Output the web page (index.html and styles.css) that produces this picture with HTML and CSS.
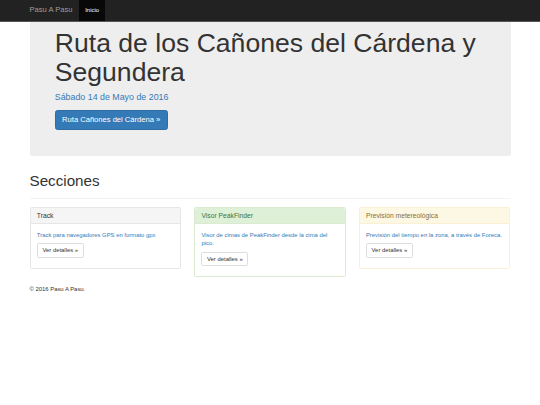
FILE: index.html
```html
<!DOCTYPE html>
<html lang="es">
<head>
    <meta charset="UTF-8">
    <meta name="viewport" content="width=device-width, initial-scale=1.0">
    <title>Pasu A Pasu</title>
    <link rel="stylesheet" href="styles.css">
</head>
<body>
    <nav class="navbar">
        <div class="container navbar-inner">
            <a class="brand" href="#">Pasu A Pasu</a>
            <ul class="nav">
                <li class="active"><a href="#">Inicio</a></li>
            </ul>
        </div>
    </nav>

    <div class="container">
        <div class="jumbotron">
            <h1>Ruta de los Cañones del Cárdena y Segundera</h1>
            <p class="date">Sábado 14 de Mayo de 2016</p>
            <p><a class="btn btn-primary btn-lg" href="#">Ruta Cañones del Cárdena &raquo;</a></p>
        </div>

        <div class="page-header">
            <h1>Secciones</h1>
        </div>

        <div class="row">
            <div class="panel panel-default">
                <div class="panel-heading">Track</div>
                <div class="panel-body">
                    <p class="desc">Track para navegadores GPS en formato gpx</p>
                    <p><a class="btn btn-default" href="#">Ver detalles &raquo;</a></p>
                </div>
            </div>
            <div class="panel panel-success">
                <div class="panel-heading">Visor PeakFinder</div>
                <div class="panel-body">
                    <p class="desc">Visor de cimas de PeakFinder desde la cima del pico.</p>
                    <p><a class="btn btn-default" href="#">Ver detalles &raquo;</a></p>
                </div>
            </div>
            <div class="panel panel-warning">
                <div class="panel-heading">Previsión metereológica</div>
                <div class="panel-body">
                    <p class="desc">Previsión del tiempo en la zona, a través de Foreca.</p>
                    <p><a class="btn btn-default" href="#">Ver detalles &raquo;</a></p>
                </div>
            </div>
        </div>

        <footer>
            <p>&copy; 2016 Pasu A Pasu.</p>
        </footer>
    </div>
</body>
</html>
```

FILE: styles.css
```css
body {
    margin: 0;
    font-family: 'Liberation Sans', Arial, sans-serif;
    font-size: 5.9px;
    line-height: 8.44px;
    color: #333;
    background-color: #fff;
}
a {
    text-decoration: none;
}
p {
    margin: 0 0 4.22px;
}
.container {
    width: 481px;
    margin: 0 auto;
    padding: 0 6.33px;
}

/* navbar */
.navbar {
    background-color: #222;
    border-bottom: 1px solid #555;
    height: 20.6px;
}
.navbar-inner {
    display: flex;
    align-items: stretch;
    height: 100%;
}
.brand {
    margin-left: -6.33px;
    padding: 0 6.33px;
    font-size: 7.6px;
    line-height: 20.6px;
    color: #9d9d9d;
}
.nav {
    display: flex;
    list-style: none;
    margin: 0;
    padding: 0;
}
.nav a {
    display: block;
    padding: 0 6.33px;
    line-height: 20.6px;
    color: #9d9d9d;
}
.nav .active a {
    background-color: #080808;
    color: #fff;
}

/* jumbotron */
.jumbotron {
    background-color: #eee;
    border-radius: 0 0 2.5px 2.5px;
    padding: 7.1px 25.3px 20.25px;
    margin-bottom: 12.66px;
}
.jumbotron h1 {
    font-size: 26.58px;
    line-height: 1.1;
    font-weight: 500;
    margin: 0 0 4.22px;
}
.jumbotron p {
    margin-bottom: 6.33px;
}
.jumbotron .date {
    font-size: 8.86px;
    line-height: 12.66px;
    color: #337ab7;
}

/* buttons */
.btn {
    display: inline-block;
    border: 1px solid transparent;
    white-space: nowrap;
}
.btn-lg {
    font-size: 7.59px;
    line-height: 10.12px;
    padding: 3.65px 6.3px;
    border-radius: 2.5px;
}
.btn-primary {
    background-color: #337ab7;
    border-color: #2e6da4;
    color: #fff;
}
.btn-default {
    background-color: #fff;
    border-color: #ddd;
    color: #333;
    font-size: 5.9px;
    line-height: 8.44px;
    padding: 1.95px 4.6px;
    border-radius: 1.7px;
}

/* sections */
.page-header {
    margin: 16.88px 0 8.44px;
    padding-bottom: 3.8px;
    border-bottom: 1px solid #f3f3f3;
}
.page-header h1 {
    font-size: 15.19px;
    line-height: 16.7px;
    font-weight: 500;
    margin: 0 0 4.22px;
}
.row {
    display: grid;
    grid-template-columns: repeat(3, 1fr);
    gap: 12.66px;
    align-items: start;
}
.panel {
    border: 1px solid #e6e6e6;
    border-radius: 1.7px;
    margin-bottom: 8.44px;
    background-color: #fff;
}
.panel-heading {
    padding: 3.8px 6.33px;
    border-bottom: 1px solid #e6e6e6;
    border-radius: 1.7px 1.7px 0 0;
    font-size: 6.75px;
    line-height: 7.43px;
}
.panel-default .panel-heading {
    background-color: #f5f5f5;
    color: #333;
}
.panel-success {
    border-color: #dcebd0;
}
.panel-success .panel-heading {
    background-color: #dff0d8;
    border-color: #dcebd0;
    color: #3c763d;
}
.panel-warning {
    border-color: #fbefd6;
}
.panel-warning .panel-heading {
    background-color: #fcf8e3;
    border-color: #fbefd6;
    color: #8a6d3b;
}
.panel-body {
    padding: 6.33px 6.33px 5.6px;
}
.panel-body .desc {
    color: #337ab7;
}

footer p {
    margin: 0;
}
```
